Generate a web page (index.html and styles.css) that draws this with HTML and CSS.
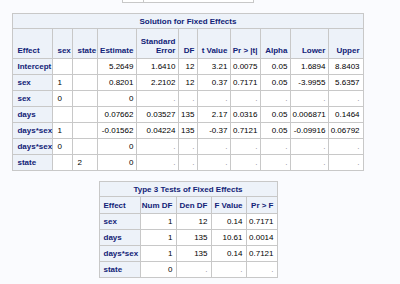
FILE: index.html
```html
<!DOCTYPE html>
<html>
<head>
<meta charset="utf-8">
<link rel="stylesheet" href="styles.css">
</head>
<body>
<div class="page">
  <div class="prev"><div class="prev-a"></div><div class="prev-b"></div></div>

  <table class="sas main">
    <colgroup>
      <col style="width:40px"><col style="width:20px"><col style="width:25px"><col style="width:39px"><col style="width:42px"><col style="width:19px"><col style="width:33px"><col style="width:30px"><col style="width:30px"><col style="width:38px"><col style="width:34px">
    </colgroup>
    <thead>
      <tr class="title"><th colspan="11">Solution for Fixed Effects</th></tr>
      <tr class="head2">
        <th class="l">Effect</th><th class="l">sex</th><th class="l">state</th><th class="r">Estimate</th><th class="r">Standard<br>Error</th><th class="r">DF</th><th class="r">t Value</th><th class="r">Pr &gt; |t|</th><th class="r">Alpha</th><th class="r">Lower</th><th class="r">Upper</th>
      </tr>
    </thead>
    <tbody>
      <tr><th class="l">Intercept</th><td class="l"></td><td class="l"></td><td>5.2649</td><td>1.6410</td><td>12</td><td>3.21</td><td>0.0075</td><td>0.05</td><td>1.6894</td><td>8.8403</td></tr>
      <tr><th class="l">sex</th><td class="l">1</td><td class="l"></td><td>0.8201</td><td>2.2102</td><td>12</td><td>0.37</td><td>0.7171</td><td>0.05</td><td>-3.9955</td><td>5.6357</td></tr>
      <tr><th class="l">sex</th><td class="l">0</td><td class="l"></td><td>0</td><td class="dot">.</td><td class="dot">.</td><td class="dot">.</td><td class="dot">.</td><td class="dot">.</td><td class="dot">.</td><td class="dot">.</td></tr>
      <tr><th class="l">days</th><td class="l"></td><td class="l"></td><td>0.07662</td><td>0.03527</td><td>135</td><td>2.17</td><td>0.0316</td><td>0.05</td><td>0.006871</td><td>0.1464</td></tr>
      <tr><th class="l">days*sex</th><td class="l">1</td><td class="l"></td><td>-0.01562</td><td>0.04224</td><td>135</td><td>-0.37</td><td>0.7121</td><td>0.05</td><td>-0.09916</td><td>0.06792</td></tr>
      <tr><th class="l">days*sex</th><td class="l">0</td><td class="l"></td><td>0</td><td class="dot">.</td><td class="dot">.</td><td class="dot">.</td><td class="dot">.</td><td class="dot">.</td><td class="dot">.</td><td class="dot">.</td></tr>
      <tr><th class="l">state</th><td class="l"></td><td class="l">2</td><td>0</td><td class="dot">.</td><td class="dot">.</td><td class="dot">.</td><td class="dot">.</td><td class="dot">.</td><td class="dot">.</td><td class="dot">.</td></tr>
    </tbody>
  </table>

  <table class="sas type3">
    <colgroup>
      <col style="width:41px"><col style="width:36px"><col style="width:35px"><col style="width:35px"><col style="width:31px">
    </colgroup>
    <thead>
      <tr class="title"><th colspan="5">Type 3 Tests of Fixed Effects</th></tr>
      <tr class="head1">
        <th class="l">Effect</th><th class="r">Num DF</th><th class="r">Den DF</th><th class="r">F Value</th><th class="r">Pr &gt; F</th>
      </tr>
    </thead>
    <tbody>
      <tr><th class="l">sex</th><td>1</td><td>12</td><td>0.14</td><td>0.7171</td></tr>
      <tr><th class="l">days</th><td>1</td><td>135</td><td>10.61</td><td>0.0014</td></tr>
      <tr><th class="l">days*sex</th><td>1</td><td>135</td><td>0.14</td><td>0.7121</td></tr>
      <tr><th class="l">state</th><td>0</td><td class="dot">.</td><td class="dot">.</td><td class="dot">.</td></tr>
    </tbody>
  </table>
</div>
</body>
</html>
```

FILE: styles.css
```css
html, body {
  margin: 0;
  padding: 0;
  background: #fafbfe;
}

.page {
  width: 376px;
  font-family: "Liberation Sans", Arial, sans-serif;
  font-size: 8px;
  line-height: 9px;
  color: #000;
}

.prev {
  display: flex;
  width: 130px;
  height: 2px;
  margin: 0 auto;
  background: #fff;
  border: 1px solid #c8c8c8;
  border-top: none;
}

.prev-a {
  width: 20px;
  border-right: 1px solid #c8c8c8;
}

.prev-b {
  flex: 1;
}

.sas {
  border-collapse: collapse;
  table-layout: fixed;
  margin: 0 auto;
  background: #fff;
}

.main {
  width: 350px;
  margin-top: 10px;
}

.type3 {
  width: 178px;
  margin-top: 10px;
}

.sas th,
.sas td {
  border: 1px solid #c8c8c8;
  padding: 0 3px 0 1px;
  white-space: nowrap;
  overflow: visible;
}

.sas th {
  background: #edf2f9;
  color: #112277;
  font-weight: bold;
}

.sas td {
  text-align: right;
  vertical-align: middle;
  background: #fff;
}

.sas .l,
.sas td.l {
  text-align: left;
  padding-left: 4px;
}

.sas .r {
  text-align: right;
}

.sas tr.title th {
  text-align: center;
  height: 14px;
  vertical-align: middle;
  padding: 0;
}

.sas tr.head2 th {
  height: 26px;
  vertical-align: bottom;
  padding-bottom: 3px;
}

.sas tr.head1 th {
  height: 16px;
  vertical-align: middle;
}

.sas tbody tr {
  height: 16px;
}

.sas tbody th {
  vertical-align: middle;
}

.sas td.dot {
  color: #888;
}
```
